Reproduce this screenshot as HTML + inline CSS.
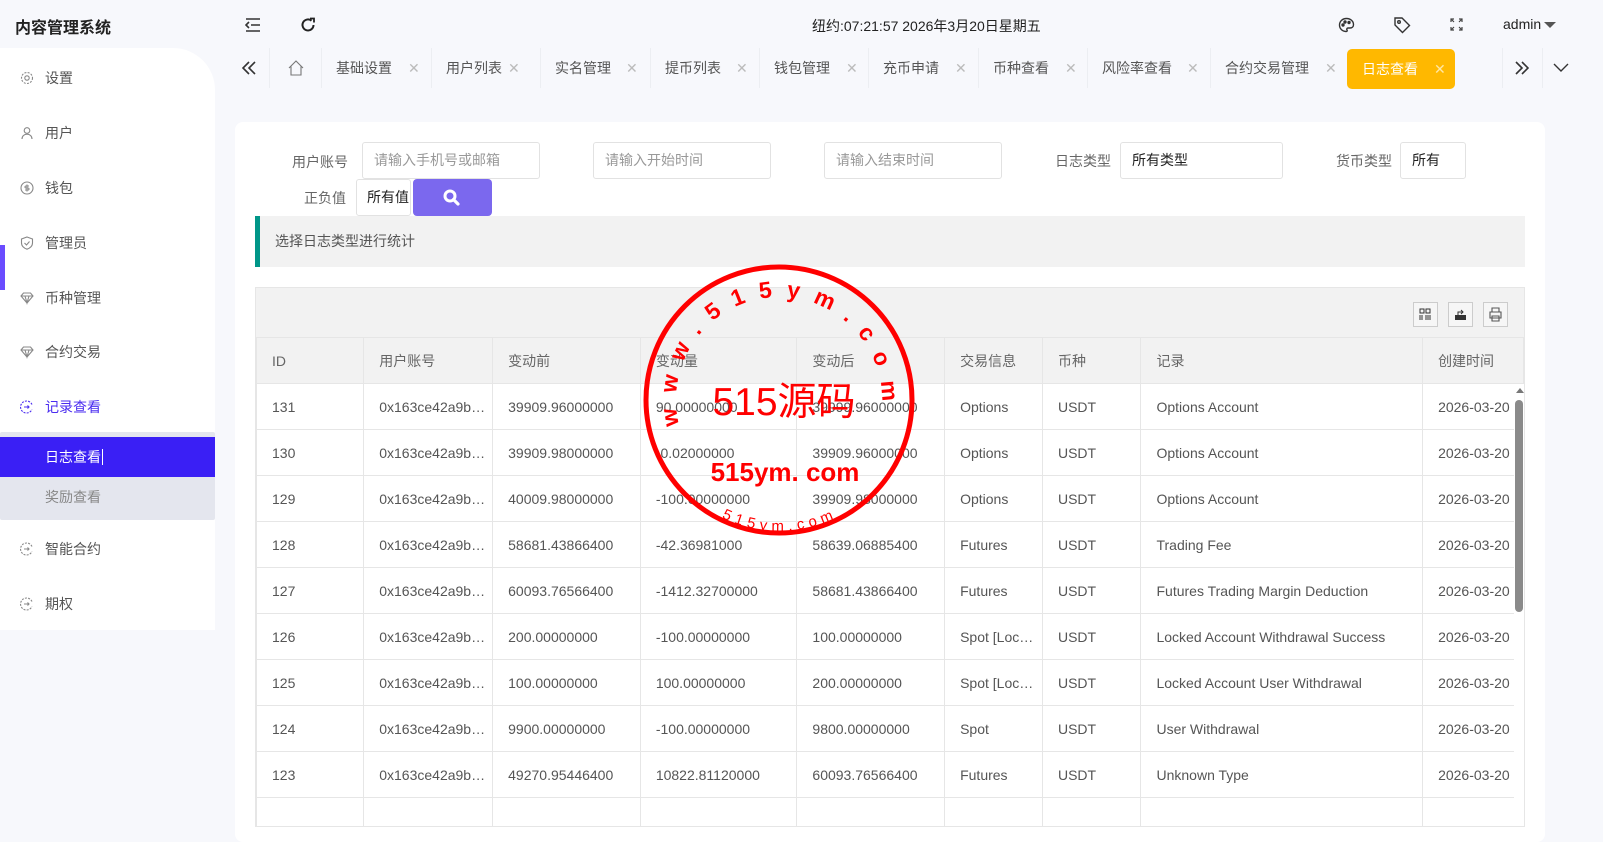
<!DOCTYPE html>
<html><head><meta charset="utf-8"><style>
*{margin:0;padding:0;box-sizing:border-box}
body{width:1603px;height:820px;overflow:hidden;background:#f7f8fc;font-family:"Liberation Sans","Noto Sans CJK SC",sans-serif;font-size:14px;color:#333;position:relative}
.a{position:absolute}
.side{left:0;top:48px;width:215px;height:582px;background:#fff;border-top-right-radius:42px}
.mi{position:absolute;left:20px;font-size:14px;color:#555;display:flex;align-items:center;gap:11px}
.mi svg{width:14px;height:14px}
.tab{position:absolute;top:48px;height:40px;line-height:40px;font-size:14px;color:#555;border-left:1px solid #eceef2}
.tab .x{position:absolute;color:#bbb;font-size:14px}
.card{left:235px;top:122px;width:1310px;height:720px;background:#fff;border-radius:8px}
.lbl{position:absolute;font-size:14px;color:#666}
.inp{position:absolute;border:1px solid #e2e2e2;border-radius:3px;height:37px;line-height:35px;padding-left:11px;font-size:14px;color:#999;background:#fff}
.tbl{left:255px;top:287px;width:1270px;height:540px;border:1px solid #e6e6e6;overflow:hidden}
table{border-collapse:collapse;position:absolute;left:0;top:49px;table-layout:fixed}
td,th{border:1px solid #e6e6e6;height:46px;padding-left:15px;font-size:14px;color:#555;font-weight:normal;text-align:left;white-space:nowrap;overflow:hidden}
th{background:#f2f2f2;color:#666}
.ib{position:absolute;top:14px;width:25px;height:25px;border:1px solid #ccc;background:#f6f6f6}
</style></head><body>
<div class="a" style="left:15px;top:14px;font-size:16px;font-weight:bold;color:#222">内容管理系统</div>
<svg class="a" style="left:245px;top:17px" width="16" height="16" viewBox="0 0 16 16" fill="none" stroke="#333" stroke-width="1.6"><path d="M1 2h14M6 8h9M1 14h14M4 5L1 8l3 3"/></svg>
<svg class="a" style="left:300px;top:17px" width="16" height="16" viewBox="0 0 16 16" fill="none" stroke="#222" stroke-width="2"><path d="M13.5 8a5.5 5.5 0 1 1-2-4.3"/><path d="M10 1.5h4v4" stroke-width="1.8"/></svg>
<div class="a" style="left:812px;top:16px;font-size:14px;color:#222">纽约:07:21:57 2026年3月20日星期五</div>
<svg class="a" style="left:1338px;top:17px" width="17" height="16" viewBox="0 0 17 16" fill="none" stroke="#333" stroke-width="1.4"><path d="M8.5 1.5C4.5 1.5 1.5 4.3 1.5 8s3 6.5 6.5 6.5c1.2 0 1.5-.8 1-1.6-.6-.9 0-1.9 1-1.9h2c2 0 3.5-1.3 3.5-3.4 0-3.4-3-6.1-7-6.1z"/><circle cx="5" cy="8" r="1" fill="#333"/><circle cx="7" cy="5" r="1" fill="#333"/><circle cx="11" cy="5.5" r="1" fill="#333"/></svg>
<svg class="a" style="left:1393px;top:16px" width="18" height="18" viewBox="0 0 18 18" fill="none" stroke="#333" stroke-width="1.4"><path d="M2 2h7l7.5 7.5-7 7L2 9z"/><circle cx="6" cy="6" r="1.3"/></svg>
<svg class="a" style="left:1450px;top:18px" width="13" height="13" viewBox="0 0 13 13" fill="none" stroke="#444" stroke-width="1.2"><path d="M1 4V1h3M9 1h3v3M12 9v3H9M4 12H1V9M1 1l3 3M12 1L9 4M12 12L9 9M1 12l3-3"/></svg>
<div class="a" style="left:1503px;top:16px;font-size:14px;color:#222">admin</div>
<div class="a" style="left:1544px;top:22px;width:0;height:0;border-left:6px solid transparent;border-right:6px solid transparent;border-top:6px solid #555"></div>

<div class="a side">
<div class="mi" style="top:20px"><svg viewBox="0 0 14 14" fill="none" stroke="#888" stroke-width="1.1"><circle cx="7" cy="7" r="2.2"/><circle cx="7" cy="7" r="5.5" stroke-dasharray="2 1.3"/></svg>设置</div>
<div class="mi" style="top:75px"><svg viewBox="0 0 14 14" fill="none" stroke="#888" stroke-width="1.1"><circle cx="7" cy="4.5" r="2.8"/><path d="M2 13c0-3 2.2-4.8 5-4.8s5 1.8 5 4.8"/></svg>用户</div>
<div class="mi" style="top:130px"><svg viewBox="0 0 14 14" fill="none" stroke="#888" stroke-width="1.1"><circle cx="7" cy="7" r="6"/><path d="M9 5H6a1 1 0 0 0 0 2h2a1 1 0 0 1 0 2H5M7 3.5v7"/></svg>钱包</div>
<div class="mi" style="top:185px"><svg viewBox="0 0 14 14" fill="none" stroke="#888" stroke-width="1.1"><path d="M7 1l5.5 2v4c0 3-2.5 5.3-5.5 6.2C4 12.3 1.5 10 1.5 7V3z"/><path d="M4.5 7l2 2 3-3.5"/></svg>管理员</div>
<div class="mi" style="top:240px"><svg viewBox="0 0 14 14" fill="none" stroke="#888" stroke-width="1.1"><path d="M1 5l2.5-3h7L13 5l-6 7z M1 5h12M5 5l2 7 2-7"/></svg>币种管理</div>
<div class="mi" style="top:294px"><svg viewBox="0 0 14 14" fill="none" stroke="#888" stroke-width="1.1"><path d="M1 5l2.5-3h7L13 5l-6 7z M1 5h12M5 5l2 7 2-7"/></svg>合约交易</div>
<div class="mi" style="top:349px;color:#4a2cf0"><svg viewBox="0 0 14 14" fill="none" stroke="#4a2cf0" stroke-width="1.1"><path d="M12 4.5A6 6 0 1 0 12 9.5" stroke-dasharray="2 1.2"/><path d="M4 7h5M7.5 5.5L9 7l-1.5 1.5"/></svg>记录查看</div>
<div class="mi" style="top:491px"><svg viewBox="0 0 14 14" fill="none" stroke="#888" stroke-width="1.1"><path d="M12 4.5A6 6 0 1 0 12 9.5" stroke-dasharray="2 1.2"/><path d="M4 7h5M7.5 5.5L9 7l-1.5 1.5"/></svg>智能合约</div>
<div class="mi" style="top:546px"><svg viewBox="0 0 14 14" fill="none" stroke="#888" stroke-width="1.1"><path d="M12 4.5A6 6 0 1 0 12 9.5" stroke-dasharray="2 1.2"/><path d="M4 7h5M7.5 5.5L9 7l-1.5 1.5"/></svg>期权</div>
</div>
<div class="a" style="left:0;top:245px;width:5px;height:45px;background:#6a4cff"></div>
<div class="a" style="left:0;top:432px;width:215px;height:88px;background:#e4e6ee;border-radius:2px"></div>
<div class="a" style="left:0;top:437px;width:215px;height:40px;background:#3a1ff5;color:#fff;padding-left:45px;line-height:40px">日志查看<span style="border-left:1px solid #fff;margin-left:1px"></span></div>
<div class="a" style="left:45px;top:487px;color:#888">奖励查看</div>

<svg class="a" style="left:241px;top:61px" width="16" height="14" viewBox="0 0 16 14" fill="none" stroke="#333" stroke-width="1.6"><path d="M8 1L2 7l6 6M14 1L8 7l6 6"/></svg>
<div class="tab" style="left:269px;width:52px"><svg style="position:absolute;left:18px;top:12px" width="16" height="16" viewBox="0 0 16 16" fill="none" stroke="#777" stroke-width="1.1"><path d="M1 8l7-7 7 7M3 6.5V15h10V6.5"/></svg></div>
<div class="tab" style="left:321px;width:112px;padding-left:14px">基础设置<span class="x" style="left:86px">✕</span></div>
<div class="tab" style="left:431px;width:110px;padding-left:14px">用户列表<span class="x" style="left:76px">✕</span></div>
<div class="tab" style="left:540px;width:110px;padding-left:14px">实名管理<span class="x" style="left:85px">✕</span></div>
<div class="tab" style="left:650px;width:110px;padding-left:14px">提币列表<span class="x" style="left:85px">✕</span></div>
<div class="tab" style="left:759px;width:110px;padding-left:14px">钱包管理<span class="x" style="left:86px">✕</span></div>
<div class="tab" style="left:868px;width:110px;padding-left:14px">充币申请<span class="x" style="left:86px">✕</span></div>
<div class="tab" style="left:978px;width:110px;padding-left:14px">币种查看<span class="x" style="left:86px">✕</span></div>
<div class="tab" style="left:1087px;width:124px;padding-left:14px">风险率查看<span class="x" style="left:99px">✕</span></div>
<div class="tab" style="left:1210px;width:136px;padding-left:14px">合约交易管理<span class="x" style="left:114px">✕</span></div>
<div class="a" style="left:1347px;top:49px;width:108px;height:40px;background:#ffb800;border-radius:5px;color:#fff;line-height:40px;padding-left:15px">日志查看<span style="position:absolute;left:87px;color:#ffe7a6">✕</span></div>
<div class="tab" style="left:1502px;width:40px"><svg style="position:absolute;left:12px;top:13px" width="14" height="14" viewBox="0 0 14 14" fill="none" stroke="#333" stroke-width="1.6"><path d="M1 1l6 6-6 6M7 1l6 6-6 6"/></svg></div>
<div class="tab" style="left:1542px;width:61px"><svg style="position:absolute;left:10px;top:15px" width="16" height="10" viewBox="0 0 16 10" fill="none" stroke="#333" stroke-width="1.4"><path d="M1 1l7 7 7-7"/></svg></div>

<div class="a card"></div>
<div class="lbl" style="left:292px;top:152px">用户账号</div>
<div class="inp" style="left:362px;top:142px;width:178px">请输入手机号或邮箱</div>
<div class="inp" style="left:593px;top:142px;width:178px">请输入开始时间</div>
<div class="inp" style="left:824px;top:142px;width:178px">请输入结束时间</div>
<div class="lbl" style="left:1055px;top:151px">日志类型</div>
<div class="inp" style="left:1120px;top:142px;width:163px;color:#222">所有类型</div>
<div class="lbl" style="left:1336px;top:151px">货币类型</div>
<div class="inp" style="left:1400px;top:142px;width:66px;color:#222">所有</div>
<div class="lbl" style="left:304px;top:188px">正负值</div>
<div class="inp" style="left:356px;top:179px;width:55px;color:#222;padding-left:10px">所有值</div>
<div class="a" style="left:413px;top:179px;width:79px;height:37px;background:#7b68ee;border-radius:4px"><svg style="position:absolute;left:30px;top:10px" width="17" height="17" viewBox="0 0 17 17"><circle cx="7" cy="7" r="5" fill="none" stroke="#fff" stroke-width="3"/><path d="M10.5 10.5l4.5 4.5" stroke="#fff" stroke-width="3.2" stroke-linecap="round"/></svg></div>
<div class="a" style="left:255px;top:216px;width:1270px;height:51px;background:#f2f2f2;border-left:5px solid #009688;padding-left:15px;line-height:51px;color:#555">选择日志类型进行统计</div>

<div class="a tbl">
<div style="position:absolute;left:0;top:0;width:100%;height:49px;background:#f2f2f2"></div>
<div class="ib" style="left:1157px"><svg width="23" height="23" viewBox="0 0 23 23" fill="none" stroke="#333" stroke-width="1"><path d="M6 6h4v4H6zM12 6h4v4h-4zM6 12v5M8 12v5M12 12v5M14 12v5M16 12v5"/></svg></div>
<div class="ib" style="left:1192px"><svg width="23" height="23" viewBox="0 0 23 23"><path d="M6 12h11v5H6z" fill="#333"/><path d="M9 12v-3h5M12 7l2 2-2 2" fill="none" stroke="#333"/></svg></div>
<div class="ib" style="left:1227px"><svg width="23" height="23" viewBox="0 0 23 23" fill="none" stroke="#555" stroke-width="1.1"><path d="M8 9V5h7v4M6 9h11v6H6zM8 13h7v5H8z"/></svg></div>
<table>
<colgroup><col width="108"><col width="129"><col width="148"><col width="157"><col width="148"><col width="98"><col width="99"><col width="282"><col width="101"></colgroup>
<tr><th>ID</th><th>用户账号</th><th>变动前</th><th>变动量</th><th>变动后</th><th>交易信息</th><th>币种</th><th>记录</th><th>创建时间</th></tr>
<tr><td>131</td><td>0x163ce42a9b…</td><td>39909.96000000</td><td>90.00000000</td><td>39999.96000000</td><td>Options</td><td>USDT</td><td>Options Account</td><td>2026-03-20</td></tr>
<tr><td>130</td><td>0x163ce42a9b…</td><td>39909.98000000</td><td>-0.02000000</td><td>39909.96000000</td><td>Options</td><td>USDT</td><td>Options Account</td><td>2026-03-20</td></tr>
<tr><td>129</td><td>0x163ce42a9b…</td><td>40009.98000000</td><td>-100.00000000</td><td>39909.98000000</td><td>Options</td><td>USDT</td><td>Options Account</td><td>2026-03-20</td></tr>
<tr><td>128</td><td>0x163ce42a9b…</td><td>58681.43866400</td><td>-42.36981000</td><td>58639.06885400</td><td>Futures</td><td>USDT</td><td>Trading Fee</td><td>2026-03-20</td></tr>
<tr><td>127</td><td>0x163ce42a9b…</td><td>60093.76566400</td><td>-1412.32700000</td><td>58681.43866400</td><td>Futures</td><td>USDT</td><td>Futures Trading Margin Deduction</td><td>2026-03-20</td></tr>
<tr><td>126</td><td>0x163ce42a9b…</td><td>200.00000000</td><td>-100.00000000</td><td>100.00000000</td><td>Spot [Loc…</td><td>USDT</td><td>Locked Account Withdrawal Success</td><td>2026-03-20</td></tr>
<tr><td>125</td><td>0x163ce42a9b…</td><td>100.00000000</td><td>100.00000000</td><td>200.00000000</td><td>Spot [Loc…</td><td>USDT</td><td>Locked Account User Withdrawal</td><td>2026-03-20</td></tr>
<tr><td>124</td><td>0x163ce42a9b…</td><td>9900.00000000</td><td>-100.00000000</td><td>9800.00000000</td><td>Spot</td><td>USDT</td><td>User Withdrawal</td><td>2026-03-20</td></tr>
<tr><td>123</td><td>0x163ce42a9b…</td><td>49270.95446400</td><td>10822.81120000</td><td>60093.76566400</td><td>Futures</td><td>USDT</td><td>Unknown Type</td><td>2026-03-20</td></tr>
<tr><td></td><td></td><td></td><td></td><td></td><td></td><td></td><td></td><td></td></tr>
</table>
<div style="position:absolute;left:1258px;top:96px;width:10px;height:450px;background:#fff"></div>
<div style="position:absolute;left:1260px;top:100px;width:0;height:0;border-left:4px solid transparent;border-right:4px solid transparent;border-bottom:5px solid #777"></div>
<div style="position:absolute;left:1259px;top:112px;width:8px;height:212px;background:#8a8a8a;border-radius:4px"></div>
</div>

<svg class="a" style="left:0;top:0" width="1603" height="820" viewBox="0 0 1603 820">
<defs>
<path id="ta" d="M679.1 424.9 A103 103 0 1 1 881.9 405.4"/>
<path id="tb" d="M721.6 517.7 A131 131 0 0 0 836.4 517.7"/>
</defs>
<circle cx="779" cy="400" r="133" fill="none" stroke="#f00" stroke-width="5"/>
<text font-family="Liberation Sans,sans-serif" font-size="23" font-weight="bold" fill="#f00"><textPath href="#ta" textLength="350" lengthAdjust="spacing">www.515ym.com</textPath></text>
<text font-family="Liberation Sans,sans-serif" font-size="15" fill="#f00"><textPath href="#tb" textLength="116" lengthAdjust="spacing">515ym.com</textPath></text>
<text x="784" y="415" text-anchor="middle" font-family="Liberation Sans,Noto Sans CJK SC,sans-serif" font-size="39" fill="#f00">515源码</text>
<text x="785" y="481" text-anchor="middle" font-family="Liberation Sans,sans-serif" font-size="26" font-weight="bold" fill="#f00">515ym. com</text>
</svg>
</body></html>
